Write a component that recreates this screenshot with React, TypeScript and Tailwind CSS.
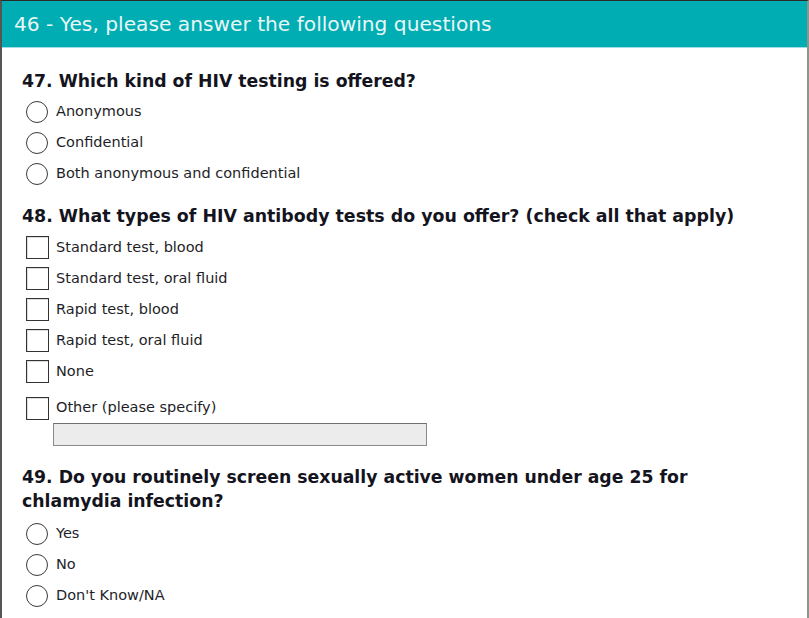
import React from "react";

const font = { fontFamily: '"DejaVu Sans", Verdana, sans-serif' };

function Radio({ label }: { label: string }) {
  return (
    <div className="flex h-[31px] items-center">
      <span className="ml-[4px] box-border h-[22px] w-[22px] rounded-full border-[1.5px] border-[#3a3a3a] bg-white" />
      <span className="ml-[8px] text-[14.5px] text-[#1e1e28]">{label}</span>
    </div>
  );
}

function Check({ label, className = "" }: { label: string; className?: string }) {
  return (
    <div className={`flex items-center ${className}`}>
      <span className="ml-[4px] box-border h-[23px] w-[23px] border border-[#333] bg-white shadow-[inset_1px_1px_0_#ddd]" />
      <span className="ml-[7px] text-[14.5px] text-[#1e1e28]">{label}</span>
    </div>
  );
}

export default function App() {
  return (
    <div
      style={font}
      className="box-border h-[618px] w-[809px] overflow-hidden border-l-2 border-r-2 border-t border-l-[#555] border-r-[#8a978a] border-t-[#2a2a2a] bg-white"
    >
      <div className="flex h-[47px] items-center border-b border-[#9fdde0] bg-[#00adb3] pl-[12px]">
        <span className="text-[20.2px] text-[#e8f6f6]">46 - Yes, please answer the following questions</span>
      </div>
      <div className="pl-[20px] pr-[40px]">
        <h2 className="mt-[21px] text-[17.3px] font-bold leading-[24px] text-[#141420]">
          47. Which kind of HIV testing is offered?
        </h2>
        <div className="mt-[3px]">
          <Radio label="Anonymous" />
          <Radio label="Confidential" />
          <Radio label="Both anonymous and confidential" />
        </div>
        <h2 className="mt-[15px] text-[17.4px] font-bold leading-[24px] text-[#141420]">
          48. What types of HIV antibody tests do you offer? (check all that apply)
        </h2>
        <div className="mt-[4px]">
          <Check label="Standard test, blood" className="h-[31px]" />
          <Check label="Standard test, oral fluid" className="h-[31px]" />
          <Check label="Rapid test, blood" className="h-[31px]" />
          <Check label="Rapid test, oral fluid" className="h-[31px]" />
          <Check label="None" className="h-[31px]" />
          <Check label="Other (please specify)" className="mt-[6px] h-[30px]" />
          <div className="ml-[31px] box-border h-[23px] w-[374px] border border-[#8a8a8a] border-t-[#6f6f6f] bg-[#ececec]" />
        </div>
        <h2 className="mt-[19px] max-w-[740px] text-[17.3px] font-bold leading-[24px] text-[#141420]">
          49. Do you routinely screen sexually active women under age 25 for chlamydia infection?
        </h2>
        <div className="mt-[5px]">
          <Radio label="Yes" />
          <Radio label="No" />
          <Radio label="Don't Know/NA" />
        </div>
      </div>
    </div>
  );
}
